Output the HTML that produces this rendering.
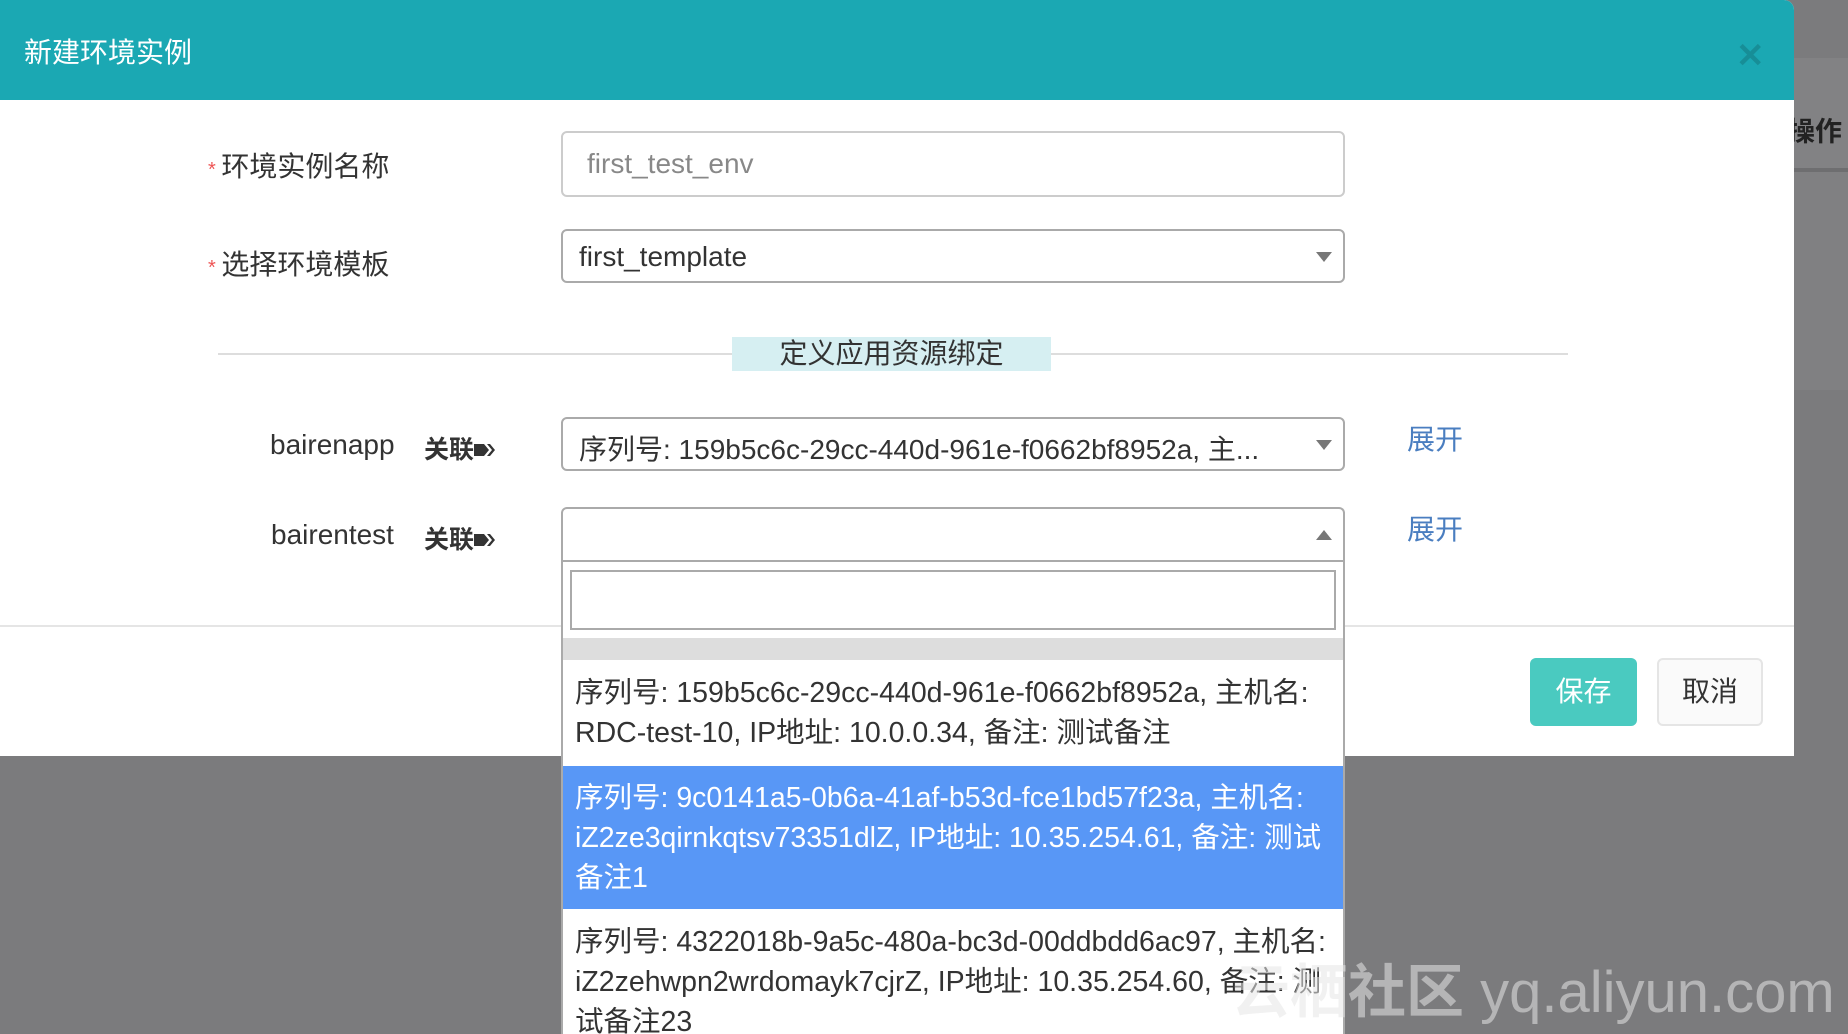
<!DOCTYPE html>
<html style="overflow:hidden;height:1034px"><head><meta charset="utf-8"><style>
*{box-sizing:border-box;margin:0;padding:0}
body{width:1848px;height:1034px;overflow:hidden;background:#7b7b7d;font-family:"Liberation Sans","Noto Sans CJK SC",sans-serif;position:relative;color:#333}
.a{position:absolute}
.modal{left:0;top:0;width:1794px;height:756px;background:#fff;border-top-right-radius:10px;overflow:visible}
.hdr{left:0;top:0;width:1794px;height:100px;background:#1ba8b3;border-top-right-radius:10px}
.lbl{font-size:28px;color:#333;white-space:nowrap}
.req{color:#e55;font-size:20px}
.inp{border:2px solid #ccc;border-radius:6px;background:#fff}
.sel{border:2px solid #aaa;border-radius:6px;background:#fff}
.caret{width:0;height:0;border-left:8px solid transparent;border-right:8px solid transparent}
.opt{font-size:28.5px;line-height:40px;padding:0 12px;white-space:nowrap}
</style></head><body>
<div class="a" style="left:1794px;top:58px;width:54px;height:110px;background:#828284"></div>
<div class="a" style="left:1794px;top:168px;width:54px;height:4px;background:#6e6e70"></div>
<div class="a" style="left:1794px;top:172px;width:54px;height:218px;background:#808082"></div>
<div class="a" style="left:1788px;top:110px;font-size:27px;font-weight:bold;color:#222">操作</div>
<div class="a modal"></div>
<div class="a hdr"></div>
<div class="a" style="left:24px;top:31px;font-size:28px;color:#fff">新建环境实例</div>
<div class="a" style="left:1736px;top:36px;font-size:34px;color:#178e97;font-weight:bold">✕</div>

<div class="a lbl" style="left:208px;top:145px"><span class="req">* </span>环境实例名称</div>
<div class="a inp" style="left:561px;top:131px;width:784px;height:66px"></div>
<div class="a" style="left:587px;top:148px;font-size:28px;color:#888">first_test_env</div>

<div class="a lbl" style="left:208px;top:243px"><span class="req">* </span>选择环境模板</div>
<div class="a sel" style="left:561px;top:229px;width:784px;height:54px"></div>
<div class="a" style="left:579px;top:241px;font-size:28px;color:#333">first_template</div>
<div class="a caret" style="left:1316px;top:252px;border-top:10px solid #777"></div>

<div class="a" style="left:218px;top:353px;width:1350px;height:2px;background:#ddd"></div>
<div class="a" style="left:732px;top:337px;width:319px;height:34px;background:#d6eff2;text-align:center;font-size:28px;line-height:34px">定义应用资源绑定</div>

<div class="a lbl" style="left:270px;top:429px">bairenapp</div>
<div class="a" style="left:424px;top:430px;font-size:25px;font-weight:bold;color:#333">关联<svg width="26" height="20" viewBox="0 0 26 20" style="vertical-align:-2px"><path d="M0 4h10l5 6-5 6H0z M13 4h3l5 6-5 6h-3l5-6z" fill="#333"/></svg></div>
<div class="a sel" style="left:561px;top:417px;width:784px;height:54px"></div>
<div class="a" style="left:579px;top:428px;font-size:28px;color:#333;white-space:nowrap">序列号: 159b5c6c-29cc-440d-961e-f0662bf8952a, 主...</div>
<div class="a caret" style="left:1316px;top:440px;border-top:10px solid #777"></div>
<div class="a" style="left:1407px;top:418px;font-size:28px;color:#4a7ec0">展开</div>

<div class="a lbl" style="left:271px;top:519px">bairentest</div>
<div class="a" style="left:424px;top:520px;font-size:25px;font-weight:bold;color:#333">关联<svg width="26" height="20" viewBox="0 0 26 20" style="vertical-align:-2px"><path d="M0 4h10l5 6-5 6H0z M13 4h3l5 6-5 6h-3l5-6z" fill="#333"/></svg></div>
<div class="a" style="left:1407px;top:508px;font-size:28px;color:#4a7ec0">展开</div>

<div class="a" style="left:0;top:625px;width:1794px;height:2px;background:#e5e5e5"></div>
<div class="a" style="left:1530px;top:658px;width:107px;height:68px;background:#4acac0;border-radius:6px;color:#fff;font-size:28px;text-align:center;line-height:68px">保存</div>
<div class="a" style="left:1657px;top:658px;width:106px;height:68px;background:#fafafa;border:2px solid #e5e5e5;border-radius:6px;font-size:28px;text-align:center;line-height:64px">取消</div>

<div class="a" style="left:561px;top:507px;width:784px;height:527px;background:#fff;border:2px solid #aaa;border-bottom:none;border-radius:6px 6px 0 0;overflow:hidden"></div>
<div class="a" style="left:561px;top:560px;width:784px;height:2px;background:#aaa"></div>
<div class="a caret" style="left:1316px;top:530px;border-bottom:10px solid #777"></div>
<div class="a" style="left:570px;top:570px;width:766px;height:60px;border:2px solid #aaa"></div>
<div class="a" style="left:563px;top:638px;width:780px;height:22px;background:#ddd"></div>
<div class="a opt" style="left:563px;top:673px;width:780px;color:#333">序列号: 159b5c6c-29cc-440d-961e-f0662bf8952a, 主机名:<br>RDC-test-10, IP地址: 10.0.0.34, 备注: 测试备注</div>
<div class="a opt" style="left:563px;top:766px;width:780px;height:143px;background:#5897f6;color:#fff;padding-top:12px">序列号: 9c0141a5-0b6a-41af-b53d-fce1bd57f23a, 主机名:<br>iZ2ze3qirnkqtsv73351dlZ, IP地址: 10.35.254.61, 备注: 测试<br>备注1</div>
<div class="a opt" style="left:563px;top:922px;width:780px;height:112px;overflow:hidden;color:#333">序列号: 4322018b-9a5c-480a-bc3d-00ddbdd6ac97, 主机名:<br>iZ2zehwpn2wrdomayk7cjrZ, IP地址: 10.35.254.60, 备注: 测<br>试备注23</div>

<div class="a" style="left:1232px;top:945px;font-size:58px;color:rgba(230,230,230,0.55);font-weight:bold;white-space:nowrap">云栖社区 <span style="font-weight:normal">yq.aliyun.com</span></div>
</body></html>
